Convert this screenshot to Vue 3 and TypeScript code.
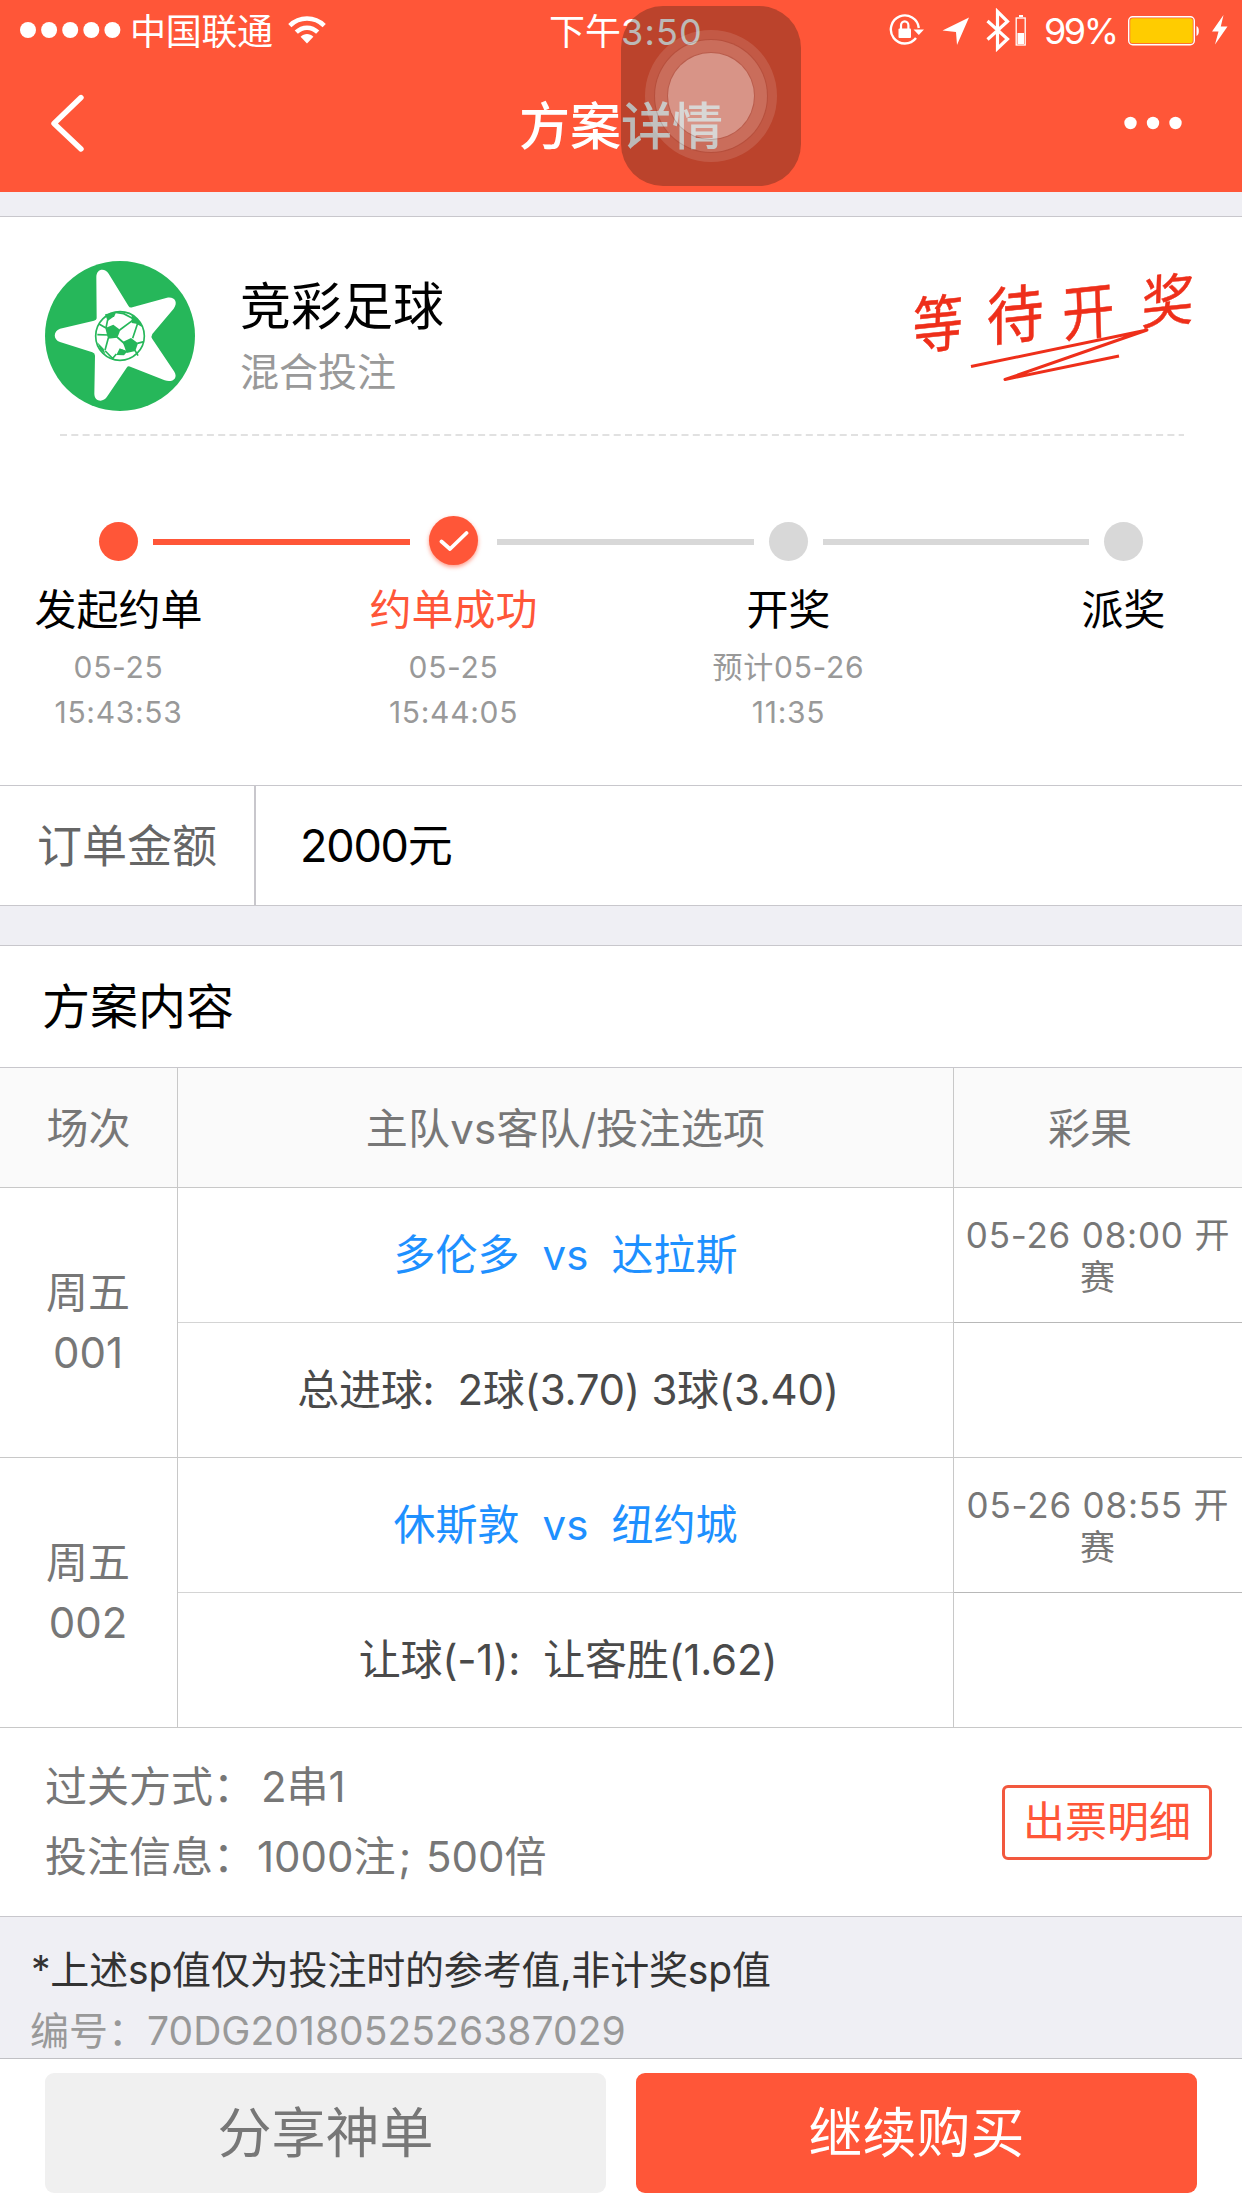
<script setup lang="ts">
interface Step {
  label: string
  lines: string[]
  state: 'done' | 'current' | 'todo'
}

interface Match {
  day: string
  no: string
  home: string
  away: string
  time: string
  pick: string
}

const steps: Step[] = [
  { label: '发起约单', lines: ['05-25', '15:43:53'], state: 'done' },
  { label: '约单成功', lines: ['05-25', '15:44:05'], state: 'current' },
  { label: '开奖', lines: ['预计05-26', '11:35'], state: 'todo' },
  { label: '派奖', lines: [], state: 'todo' },
]

const matches: Match[] = [
  { day: '周五', no: '001', home: '多伦多', away: '达拉斯', time: '05-26 08:00', pick: '总进球:  2球(3.70) 3球(3.40)' },
  { day: '周五', no: '002', home: '休斯敦', away: '纽约城', time: '05-26 08:55', pick: '让球(-1):  让客胜(1.62)' },
]
</script>

<template>
  <div class="page">
    <header class="top">
      <div class="status">
        <div class="status-left">
          <svg class="signal" width="102" height="20" viewBox="0 0 102 20" fill="#fff">
            <circle v-for="i in 5" :key="i" :cx="8 + (i - 1) * 21.1" cy="10" r="8" />
          </svg>
          <span class="carrier">中国联通</span>
          <svg width="38" height="28" viewBox="0 0 38 28" fill="none" stroke="#fff" stroke-width="4.6">
            <path d="M1.8 9.6C11.5.2 26.500.2 36.200 9.600" />
            <path d="M8.300 16.200C14.500 10.200 23.500 10.200 29.700 16.200" />
            <path d="M12.600 20.700C16.300 17.200 21.700 17.200 25.400 20.700L19 27.500Z" fill="#fff" stroke="none" />
          </svg>
        </div>
        <div class="clock">下午<span>3:50</span></div>
        <div class="status-right">
          <svg class="sys" width="312" height="44" viewBox="0 0 312 44" fill="none">
            <path d="M27 30A14 14 0 1 1 29.800 20" stroke="#fff" stroke-width="2.400" />
            <path d="M24.500 21.500H35L29.800 27Z" fill="#fff" />
            <rect x="9.500" y="20.500" width="12.500" height="9.500" rx="1" fill="#fff" />
            <path d="M12 21V17.500A3.700 4.200 0 0 1 19.400 17.500V21" stroke="#fff" stroke-width="2.200" />
            <path d="M80 9.500L53.500 22.500L67 24L68 37Z" fill="#fff" />
            <path d="M98.500 13L118.500 31L108.500 40.500V3.500L118.500 13.500L98.500 31.500" stroke="#fff" stroke-width="3.200" />
            <rect x="127.200" y="10" width="9" height="27" stroke="#fff" stroke-width="1.300" />
            <rect x="130" y="7" width="4" height="2" fill="#fff" />
            <rect x="128.500" y="25" width="6.500" height="11" fill="#fff" />
            <text x="155" y="35.500" class="percent" textLength="75">99%</text>
            <rect x="239.700" y="8.700" width="65.600" height="28" rx="4" stroke="#fff" stroke-width="1.400" />
            <rect x="241.200" y="10.200" width="62.600" height="25" rx="2.500" fill="#fc0" />
            <path d="M307.500 18C310.600 19 310.600 27 307.500 28Z" fill="#fff" />
          </svg>
          <svg width="18" height="30" viewBox="0 0 18 30" fill="#fff">
            <path d="M12.500 0L1 16.500H7.500L4 29.500L16.500 11.500H9.800Z" />
          </svg>
        </div>
      </div>
      <nav class="nav">
        <svg width="36" height="60" viewBox="0 0 36 60" fill="none" stroke="#fff" stroke-width="5.400" stroke-linecap="round" stroke-linejoin="round">
          <path d="M33 4.500L6 30.500L33 56" />
        </svg>
        <h1>方案详情</h1>
        <svg width="58" height="14" viewBox="0 0 58 14" fill="#fff">
          <circle cx="6.500" cy="7" r="6.200" />
          <circle cx="29" cy="7" r="6.200" />
          <circle cx="51.500" cy="7" r="6.200" />
        </svg>
      </nav>
      <div class="assist"><i class="ring outer"></i><i class="ring middle"></i><i class="ring inner"></i></div>
    </header>

    <section class="summary">
      <div class="game">
        <svg class="logo" width="150" height="150" viewBox="0 0 450 450">
          <circle cx="225" cy="225" r="225" fill="#26b75a" />
          <path
            fill="#fff"
            d="M155 172L154 50C153 22 180 20 191 38L250 134Q254 142 262 139L366 110C390 106 400 124 386 143L322 219Q317 227 322 234L388 332C400 352 382 366 359 358L256 317Q249 314 245 320L187 406C174 427 148 421 148 398L150 284Q150 276 142 274L45 243C24 236 24 210 45 203L147 179Q155 177 155 172Z"
          />
          <circle cx="225" cy="225" r="73" fill="#fff" stroke="#26b75a" stroke-width="5" />
          <g fill="#26b75a">
            <path d="M181 201L205 191L226 207L217 230L189 233Z" />
            <path d="M233 243L258 231L279 247L271 270L245 276Z" />
            <path d="M180 160L214 153L208 166L188 180Z" />
            <path d="M260 161L283 180L291 198L274 188L260 186Z" />
            <path d="M224 262L246 272L237 283L214 282Z" />
            <path d="M157 244L176 263L181 280L166 266Z" />
          </g>
          <path
            fill="none"
            stroke="#26b75a"
            stroke-width="5"
            d="M183 201L188 176M190 231L180 268M157 221L190 222M224 207L263 178M216 228L240 249M277 247L297 242M263 232L279 184M246 272L228 266M270 268L279 284M212 154L236 158L262 172M181 270L206 296M214 279L204 291M183 201L162 189"
          />
        </svg>
        <div class="game-text">
          <h2>竞彩足球</h2>
          <p>混合投注</p>
        </div>
        <svg class="stamp" width="300" height="120" viewBox="0 0 300 120">
          <g class="brush">
            <text transform="translate(48 80) rotate(-6) skewX(-8) scale(.88 1.080)">等</text>
            <text transform="translate(126 71) rotate(-6) skewX(-6) scale(1 1.100)">待</text>
            <text transform="translate(200 67) rotate(-6) skewX(-4) scale(.92 1.060)">开</text>
            <text transform="translate(278 55) rotate(-6) skewX(-8) scale(.92 1)">奖</text>
          </g>
          <path d="M82 99.500L258 63L116 112.500L230 89" fill="none" stroke="#ee2f1a" stroke-width="3" stroke-linejoin="round" />
        </svg>
      </div>
      <svg class="dashes" width="1124" height="2" viewBox="0 0 1124 2">
        <path d="M0 1H1124" stroke="#c4c4c4" stroke-width="1.200" stroke-dasharray="7 4.300" />
      </svg>
      <ol class="steps">
        <li v-for="(s, i) in steps" :key="s.label" :class="s.state">
          <span v-if="i < steps.length - 1" class="track" :class="'track-' + i"></span>
          <span class="node">
            <svg v-if="s.state === 'current'" width="30" height="22" viewBox="0 0 30 22" fill="none" stroke="#fff" stroke-width="3.800" stroke-linecap="round" stroke-linejoin="round">
              <path d="M2.500 11.500L11 19L27.500 3" />
            </svg>
          </span>
          <strong>{{ s.label }}</strong>
          <small v-for="l in s.lines" :key="l">{{ l }}</small>
        </li>
      </ol>
    </section>

    <section class="amount">
      <span class="amount-label">订单金额</span>
      <span class="amount-value"><span>2000</span>元</span>
    </section>

    <section class="plan">
      <h3>方案内容</h3>
      <div class="row head">
        <div class="c1">场次</div>
        <div class="c2">主队vs客队/投注选项</div>
        <div class="c3">彩果</div>
      </div>
      <div v-for="m in matches" :key="m.no" class="row match">
        <div class="c1"><span>{{ m.day }}</span><span>{{ m.no }}</span></div>
        <div class="c2">
          <div class="teams"><span>{{ m.home }}</span><span class="vs">vs</span><span>{{ m.away }}</span></div>
          <div class="pick">{{ m.pick }}</div>
        </div>
        <div class="c3">
          <div class="time"><span>{{ m.time }} 开</span><span>赛</span></div>
          <div></div>
        </div>
      </div>
      <div class="info">
        <div class="info-text">
          <p><span class="key">过关方式：</span><span class="v1">2串1</span></p>
          <p><span class="key">投注信息：</span><span class="v2">1000注<i>;</i></span><span class="v3">500倍</span></p>
        </div>
        <button class="detail">出票明细</button>
      </div>
    </section>

    <section class="note">
      <p class="tip">*上述sp值仅为投注时的参考值,非计奖sp值</p>
      <p class="serial"><span>编号：</span><span class="number">70DG2018052526387029</span></p>
    </section>

    <footer class="actions">
      <button class="share">分享神单</button>
      <button class="buy">继续购买</button>
    </footer>
  </div>
</template>

<style>
body {
  background: #efeff4;
}
</style>

<style scoped>
.page {
  width: 1242px;
  height: 2208px;
  overflow: hidden;
  display: flex;
  flex-direction: column;
  background: #efeff4;
  font-family: Inter, 'Noto Sans CJK SC', sans-serif;
  color: #000;
}
.page * {
  box-sizing: border-box;
}
h1, h2, h3, p, ol {
  margin: 0;
  padding: 0;
  font-weight: 400;
}
svg {
  display: block;
  flex: none;
}
button {
  font: inherit;
  border: 0;
  padding: 0;
}

/* header */
.top {
  position: relative;
  height: 192px;
  flex: none;
  background: #ff5638;
  color: #fff;
}
.status {
  height: 60px;
  display: grid;
  grid-template-columns: 540px 172px 1fr;
  align-items: center;
  font-size: 36px;
  line-height: 50px;
}
.status-left {
  display: flex;
  align-items: center;
  padding-left: 20px;
}
.carrier {
  margin: 3px 15px 0 8px;
  letter-spacing: -0.3px;
}
.clock {
  padding-left: 9px;
  padding-top: 3px;
  white-space: nowrap;
}
.clock span {
  letter-spacing: 1.2px;
}
.status-right {
  display: flex;
  align-items: center;
  padding-left: 177px;
}
.sys {
  margin-right: 10px;
}
.percent {
  font-size: 36px;
  fill: #fff;
}
.nav {
  height: 126px;
  display: flex;
  align-items: center;
  justify-content: space-between;
  padding: 0 60px 0 48px;
}
.nav h1 {
  font-size: 51px;
  font-weight: 500;
  line-height: 60px;
  margin: 8px -17px 0 17px;
}
.assist {
  position: absolute;
  left: 621px;
  top: 6px;
  width: 180px;
  height: 180px;
  border-radius: 42px;
  background: rgba(30, 22, 18, 0.3);
}
.ring {
  position: absolute;
  border-radius: 50%;
  background: rgba(255, 255, 255, 0.12);
}
.outer {
  inset: 24px;
}
.middle {
  inset: 34px;
  box-shadow: 0 0 0 1px rgba(120, 30, 20, 0.16);
}
.inner {
  inset: 47px;
  background: rgba(255, 255, 255, 0.27);
  box-shadow: 0 0 0 1px rgba(120, 30, 20, 0.2);
}

/* summary */
.summary {
  margin-top: 24px;
  height: 569px;
  flex: none;
  background: #fff;
  border-top: 1px solid #c8c7cc;
}
.game {
  height: 217px;
  display: flex;
  align-items: flex-start;
  padding: 44px 42px 0 45px;
}
.game-text {
  flex: 1;
  padding-left: 45px;
}
.game h2 {
  font-size: 51px;
  line-height: 60px;
  margin-top: 16px;
}
.game p {
  font-size: 39px;
  line-height: 50px;
  margin-top: 10px;
  color: #999;
}
.stamp {
  margin: 6px 11px 0 0;
  overflow: visible;
}
.brush text {
  font-size: 57px;
  fill: #ee2f1a;
  stroke: #ee2f1a;
  stroke-width: 0.5px;
  text-anchor: middle;
}
.dashes {
  margin-left: 60px;
}
.steps {
  list-style: none;
  display: grid;
  grid-template-columns: repeat(4, 335px);
  margin: 80px 0 0 -49px;
}
.steps li {
  position: relative;
  display: flex;
  flex-direction: column;
  align-items: center;
}
.node {
  width: 39px;
  height: 39px;
  margin: 6px 0;
  border-radius: 50%;
  background: #d8d8d8;
  display: flex;
  align-items: center;
  justify-content: center;
}
.done .node {
  background: #ff5638;
}
.current .node {
  width: 49px;
  height: 49px;
  margin: 0 0 2px;
  background: #ff5638;
  box-shadow: 0 2px 4px rgba(255, 86, 56, 0.6);
}
.track {
  position: absolute;
  top: 23px;
  left: 202px;
  width: 257px;
  height: 6px;
  background: #d8d8d8;
}
.track-0 {
  background: #ff5638;
}
.track-1 {
  left: 211px;
}
.track-2 {
  width: 266px;
}
.steps strong {
  font-size: 42px;
  font-weight: 400;
  line-height: 60px;
  margin: 13px 0 5px;
}
.current strong {
  color: #ff5638;
}
.steps small {
  font-size: 30px;
  line-height: 45px;
  letter-spacing: 0.7px;
  color: #999;
}

/* amount */
.amount {
  height: 121px;
  flex: none;
  display: flex;
  background: #fff;
  border-top: 1px solid #c8c7cc;
  border-bottom: 1px solid #c8c7cc;
  font-size: 45px;
  line-height: 121px;
}
.amount-label {
  width: 256px;
  padding-left: 37px;
  border-right: 2px solid #c8c7cc;
  color: #666;
}
.amount-value {
  padding-left: 44px;
  line-height: 119px;
}
.amount-value span {
  letter-spacing: -1.2px;
}

/* plan */
.plan {
  margin-top: 39px;
  flex: none;
  background: #fff;
  border-top: 1px solid #c8c7cc;
  border-bottom: 1px solid #c8c7cc;
}
.plan h3 {
  height: 122px;
  border-bottom: 1px solid #c8c7cc;
  padding-left: 42px;
  font-size: 48px;
  line-height: 121px;
}
.row {
  display: flex;
  border-bottom: 1px solid #c8c8c8;
  font-size: 42px;
  color: #777;
}
.c1 {
  width: 178px;
  border-right: 1px solid #c8c8c8;
}
.c2 {
  width: 776px;
  border-right: 1px solid #c8c8c8;
}
.c3 {
  flex: 1;
}
.head {
  height: 120px;
  line-height: 121px;
  background: #fafafa;
  text-align: center;
}
.head .c2 {
  letter-spacing: 0.25px;
}
.head .c3 {
  padding-right: 16px;
}
.match {
  height: 270px;
}
.match .c1 {
  display: flex;
  flex-direction: column;
  align-items: center;
  justify-content: center;
  line-height: 60px;
  padding: 1px 1px 0 0;
}
.match .c2,
.match .c3 {
  display: grid;
  grid-template-rows: 135px 134px;
}
.teams {
  display: flex;
  align-items: center;
  justify-content: center;
  gap: 23px;
  line-height: 60px;
  color: #1e90ff;
  border-bottom: 1px solid #d4d4d4;
}
.pick {
  display: flex;
  align-items: center;
  justify-content: center;
  white-space: pre;
  line-height: 60px;
  letter-spacing: -0.25px;
  color: #4a4a4a;
  padding-left: 5px;
}
.time {
  display: flex;
  flex-direction: column;
  align-items: center;
  justify-content: center;
  font-size: 35px;
  line-height: 42px;
  letter-spacing: 0.8px;
  padding-top: 2px;
  border-bottom: 1px solid #b8b8b8;
}
.info {
  height: 188px;
  display: flex;
  align-items: center;
  justify-content: space-between;
  padding: 0 30px 0 45px;
  font-size: 42px;
  color: #777;
}
.info-text p {
  display: flex;
  line-height: 70px;
}
.key {
  width: 211px;
}
.v1 {
  padding-left: 5px;
}
.v2 {
  width: 170px;
  padding-left: 1px;
}
.v2 i {
  font-style: normal;
  padding-left: 3px;
}
.detail {
  width: 210px;
  height: 75px;
  border: 3px solid #f2583e;
  border-radius: 6px;
  background: #fff;
  color: #ff5638;
  line-height: 67px;
  padding-bottom: 2px;
}

/* note */
.note {
  height: 142px;
  flex: none;
  border-bottom: 1px solid #c0c0c4;
  padding: 22px 0 0 30px;
  font-size: 39px;
  line-height: 61px;
  white-space: nowrap;
}
.tip {
  color: #333;
  padding-left: 1px;
  letter-spacing: -0.18px;
}
.serial {
  display: flex;
  color: #999;
}
.serial span:first-child {
  width: 117px;
}
.number {
  letter-spacing: 0.05px;
}

/* bottom bar */
.actions {
  flex: 1;
  display: flex;
  gap: 30px;
  padding: 14px 45px 15px;
  background: #fff;
}
.actions button {
  flex: 1;
  border-radius: 9px;
  font-size: 54px;
  line-height: 119px;
}
.share {
  background: #f0f0f0;
  color: #777;
}
.buy {
  background: #ff5638;
  color: #fff;
}
</style>
